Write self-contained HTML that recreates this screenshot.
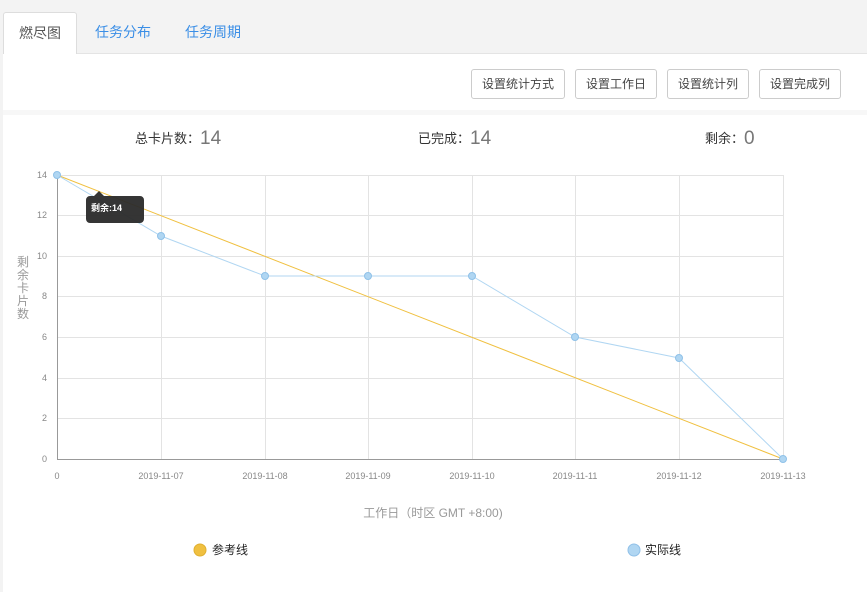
<!DOCTYPE html>
<html><head><meta charset="utf-8"><style>
*{margin:0;padding:0;box-sizing:border-box}
body{width:867px;height:592px;background:#f3f3f3;font-family:"Liberation Sans","Noto Sans CJK SC",sans-serif;position:relative;overflow:hidden}
.panel{position:absolute;left:3px;top:53px;width:864px;height:539px;background:#fff;border-top:1px solid #e4e4e4}
.tab{position:absolute;top:12px;height:42px;font-size:14px;line-height:40px;color:#3a8ee6}
.tab.act{left:3px;width:74px;background:#fff;border:1px solid #ddd;border-bottom:none;border-radius:3px 3px 0 0;color:#555;text-align:center;z-index:2}
.sep{position:absolute;left:3px;top:110px;width:864px;height:5px;background:#f7f7f7}
.btn{position:absolute;top:69px;height:30px;border:1px solid #ccc;border-radius:3px;background:#fff;font-size:12px;color:#444;text-align:center;line-height:28px}
.st{position:absolute;top:128px;font-size:13px;color:#333}
.st b{font-weight:normal;font-size:19px;color:#777;vertical-align:-1px}
</style></head><body>
<div class="panel"></div>
<div class="tab act">燃尽图</div>
<div class="tab" style="left:95px">任务分布</div>
<div class="tab" style="left:185px">任务周期</div>
<div class="btn" style="left:471px;width:94px">设置统计方式</div>
<div class="btn" style="left:575px;width:82px">设置工作日</div>
<div class="btn" style="left:667px;width:82px">设置统计列</div>
<div class="btn" style="left:759px;width:82px">设置完成列</div>
<div class="sep"></div>
<div class="st" style="left:135px">总卡片数：<b>14</b></div>
<div class="st" style="left:418px">已完成：<b>14</b></div>
<div class="st" style="left:705px">剩余：<b>0</b></div>
<svg style="position:absolute;left:0;top:0" width="867" height="592" font-family="Liberation Sans, Noto Sans CJK SC, sans-serif">
<g stroke="#e3e3e3" stroke-width="1">
<line x1="57" y1="175.5" x2="783" y2="175.5"/><line x1="57" y1="215.5" x2="783" y2="215.5"/><line x1="57" y1="256.5" x2="783" y2="256.5"/><line x1="57" y1="296.5" x2="783" y2="296.5"/><line x1="57" y1="337.5" x2="783" y2="337.5"/><line x1="57" y1="378.5" x2="783" y2="378.5"/><line x1="57" y1="418.5" x2="783" y2="418.5"/>
<line x1="161.5" y1="175" x2="161.5" y2="459"/><line x1="265.5" y1="175" x2="265.5" y2="459"/><line x1="368.5" y1="175" x2="368.5" y2="459"/><line x1="472.5" y1="175" x2="472.5" y2="459"/><line x1="575.5" y1="175" x2="575.5" y2="459"/><line x1="679.5" y1="175" x2="679.5" y2="459"/><line x1="783.5" y1="175" x2="783.5" y2="459"/>
</g>
<line x1="57.5" y1="175" x2="57.5" y2="460" stroke="#999"/>
<line x1="57" y1="459.5" x2="784" y2="459.5" stroke="#999"/>
<g font-size="9" fill="#888" text-anchor="end">
<text x="47" y="178">14</text><text x="47" y="218">12</text><text x="47" y="259">10</text><text x="47" y="299">8</text><text x="47" y="340">6</text><text x="47" y="381">4</text><text x="47" y="421">2</text><text x="47" y="462">0</text>
</g>
<g font-size="9" fill="#888" text-anchor="middle">
<text x="57" y="479">0</text><text x="161" y="479">2019-11-07</text><text x="265" y="479">2019-11-08</text><text x="368" y="479">2019-11-09</text><text x="472" y="479">2019-11-10</text><text x="575" y="479">2019-11-11</text><text x="679" y="479">2019-11-12</text><text x="783" y="479">2019-11-13</text>
</g>
<text x="433" y="517" font-size="12" fill="#999" text-anchor="middle">工作日（时区 GMT +8:00)</text>
<g font-size="12" fill="#999" text-anchor="middle"><text x="23" y="266">剩</text><text x="23" y="279">余</text><text x="23" y="292">卡</text><text x="23" y="305">片</text><text x="23" y="318">数</text></g>
<line x1="57" y1="175" x2="783" y2="459" stroke="#f0c040" stroke-width="1"/>
<polyline points="57,175 161,236 265,276 368,276 472,276 575,337 679,358 783,459" fill="none" stroke="#b0d6f2" stroke-width="1"/>
<g fill="#b0d6f2" stroke="#8fc1e8">
<circle cx="57" cy="175" r="3.5"/><circle cx="161" cy="236" r="3.5"/><circle cx="265" cy="276" r="3.5"/><circle cx="368" cy="276" r="3.5"/><circle cx="472" cy="276" r="3.5"/><circle cx="575" cy="337" r="3.5"/><circle cx="679" cy="358" r="3.5"/><circle cx="783" cy="459" r="3.5"/>
</g>
<path d="M90 196 H94 L99 191 L104 196 H140 a4 4 0 0 1 4 4 V219 a4 4 0 0 1 -4 4 H90 a4 4 0 0 1 -4 -4 V200 a4 4 0 0 1 4 -4Z" fill="#2a2a2a" opacity="0.95"/>
<text x="91" y="211" font-size="9" font-weight="bold" fill="#fff">剩余:14</text>
<circle cx="200" cy="550" r="6" fill="#f0c040" stroke="#e0b030"/>
<text x="212" y="554" font-size="12" fill="#222">参考线</text>
<circle cx="634" cy="550" r="6" fill="#b0d6f2" stroke="#90c0e8"/>
<text x="645" y="554" font-size="12" fill="#222">实际线</text>
</svg>
</body></html>
